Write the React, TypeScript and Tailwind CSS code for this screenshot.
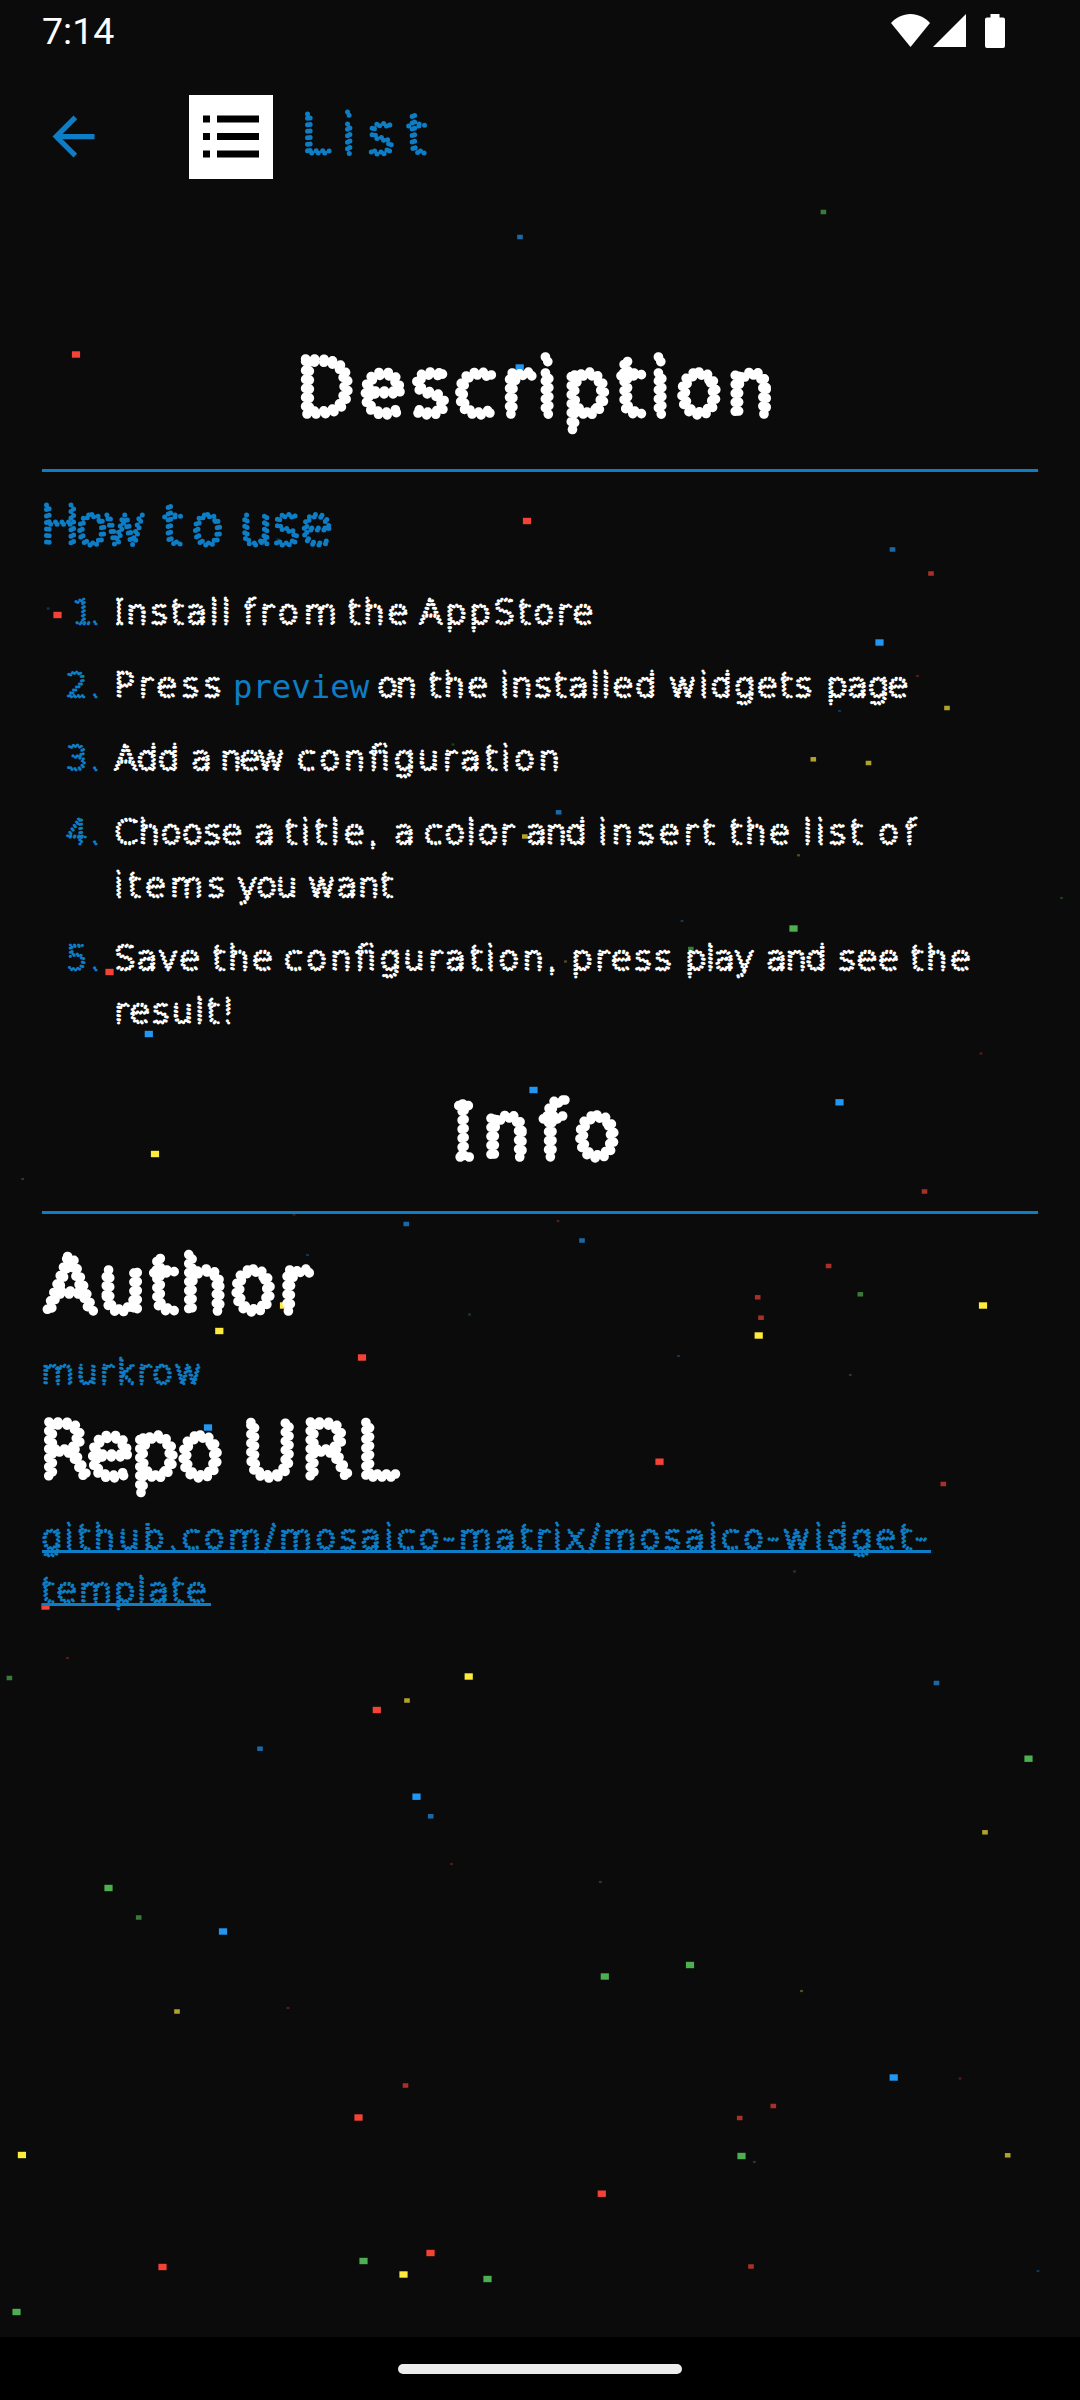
import React from "react";

type Size = "sm" | "md" | "lg";

// Metrics of the dot-matrix lettering: line box, baseline and side bearing in pixels.
const METRICS: Record<Size, { height: number; baseline: number; bearing: number; cls: string }> = {
  sm: {
    height: 53,
    baseline: 38,
    bearing: 1,
    cls: "text-[34.5px] [stroke-width:3.1px] [stroke-dasharray:0_4.1px]",
  },
  md: {
    height: 68,
    baseline: 55.5,
    bearing: 2,
    cls: "text-[53.5px] [stroke-width:5px] [stroke-dasharray:0_6.5px]",
  },
  lg: {
    height: 100,
    baseline: 78,
    bearing: 2.4,
    cls: "text-[75px] [stroke-width:9.6px] [stroke-dasharray:0_9px]",
  },
};

// [word, left edge, right edge] inside a line
type Word = [string, number, number];

function DotLine({
  words,
  size = "sm",
  underline,
}: {
  words: Word[];
  size?: Size;
  underline?: number;
}) {
  const m = METRICS[size];
  return (
    <span className={underline ? "relative flex" : "flex"}>
      {words.map(([word, start, end], i) => {
        const next = words[i + 1];
        return (
          <svg
            key={i}
            width={next ? next[1] - start : end - start}
            height={m.height}
            className="shrink-0 overflow-visible"
          >
            <text
              x={-m.bearing}
              y={m.baseline}
              textLength={end - start + m.bearing * 2}
              lengthAdjust="spacing"
              className={`fill-none stroke-current font-['DejaVu_Sans',sans-serif] font-extralight [stroke-linecap:round] ${m.cls}`}
            >
              {word.startsWith("I") ? (
                <>
                  <tspan className="font-['Noto_Sans',sans-serif] font-thin">I</tspan>
                  {word.slice(1)}
                </>
              ) : (
                word
              )}
            </text>
          </svg>
        );
      })}
      {underline ? (
        <span className="absolute left-0 top-[39px] h-[2.5px] bg-[#0d7dc5]" style={{ width: underline }} />
      ) : null}
    </span>
  );
}

const COLORS = { b: "#2196f3", r: "#f44336", y: "#ffeb3b", g: "#4caf50" };
const DOTS = {
  L: { w: 8.2, h: 6.4, o: 1 },
  M: { w: 5.6, h: 4.5, o: 0.68 },
  S: { w: 2.8, h: 2.2, o: 0.32 },
};

const PARTICLES: [keyof typeof DOTS, keyof typeof COLORS, number, number][] = [
  ["M", "b", 520, 237], ["M", "g", 823.4, 212], ["L", "b", 519.7, 367.5], ["L", "r", 76, 354.5],
  ["L", "r", 527, 521], ["S", "b", 48.2, 608.5], ["L", "r", 57.5, 615], ["S", "b", 278, 539.5],
  ["S", "g", 453, 744.5], ["M", "b", 892.5, 549.5], ["M", "r", 931, 573.5], ["L", "b", 879.5, 642.5],
  ["S", "r", 917.5, 676], ["M", "y", 947, 708], ["S", "b", 839.5, 711], ["M", "y", 813.3, 759.3],
  ["M", "y", 868.5, 763], ["M", "b", 558.6, 812.3], ["S", "y", 798.5, 855.3], ["S", "g", 1061.5, 898],
  ["M", "y", 524.8, 836.5], ["L", "r", 109.5, 972], ["L", "b", 148.8, 1034], ["L", "g", 793.5, 928.5],
  ["S", "b", 682, 921], ["S", "y", 565.5, 961.5], ["M", "g", 690.8, 949], ["S", "r", 981, 1053.5],
  ["L", "b", 839.5, 1102.3], ["M", "r", 924.5, 1191.5], ["S", "r", 558, 1221], ["M", "b", 582, 1240.5],
  ["L", "b", 533.5, 1090], ["L", "y", 155, 1154], ["S", "g", 22.6, 1179], ["M", "b", 406.3, 1224],
  ["S", "b", 307.5, 1255], ["L", "y", 284, 1305.5], ["L", "y", 219.3, 1331], ["S", "g", 469.5, 1314.5],
  ["L", "r", 362, 1357.5], ["S", "b", 678.5, 1356], ["L", "b", 208, 1427.5], ["S", "r", 294, 1214.5],
  ["M", "r", 828.6, 1266], ["M", "r", 757.7, 1297.3], ["M", "g", 860.3, 1294.3], ["M", "r", 761, 1317.7],
  ["L", "y", 983, 1305.5], ["L", "y", 758.7, 1335.5], ["S", "g", 850.3, 1375], ["L", "r", 659.5, 1461.7],
  ["M", "r", 943.3, 1484], ["S", "g", 794.5, 1571.5], ["M", "b", 936.5, 1683], ["L", "r", 45.5, 1606.5],
  ["S", "r", 67.5, 1658], ["M", "g", 9.4, 1678], ["L", "y", 468.7, 1676.5], ["M", "y", 407, 1700.5],
  ["L", "r", 376.8, 1710], ["M", "b", 260, 1748.7], ["L", "b", 416.5, 1796.7], ["M", "b", 430.7, 1816.3],
  ["S", "r", 451.5, 1864], ["L", "g", 108.5, 1888], ["M", "g", 138.7, 1917.5], ["L", "b", 223, 1931.5],
  ["M", "y", 177, 2011.5], ["S", "r", 288, 2008], ["M", "r", 405.5, 2085.5], ["L", "r", 358.5, 2117.5],
  ["L", "y", 21.9, 2155], ["L", "r", 430.5, 2253], ["L", "g", 363.5, 2261], ["L", "y", 403.5, 2274.5],
  ["L", "r", 162.5, 2267], ["L", "g", 487.5, 2279], ["L", "g", 16.5, 2312], ["L", "g", 1028.5, 1758.7],
  ["M", "y", 985, 1832.3], ["S", "g", 600.4, 1882], ["L", "g", 690, 1965], ["L", "g", 604.8, 1976.5],
  ["S", "y", 801.5, 1991], ["L", "b", 893.7, 2077.5], ["S", "r", 960, 2078.5], ["M", "r", 773.3, 2106],
  ["M", "r", 739.7, 2118], ["L", "g", 741.5, 2156], ["S", "g", 754.3, 2162], ["M", "y", 1007.7, 2155.3],
  ["L", "r", 601.8, 2193.7], ["M", "r", 751, 2266.5], ["S", "b", 1038, 2271],
];

function Particles() {
  return (
    <svg className="absolute inset-0" width="1080" height="2400" aria-hidden="true">
      {PARTICLES.map(([size, color, x, y], i) => {
        const d = DOTS[size];
        return (
          <rect
            key={i}
            x={x - d.w / 2}
            y={y - d.h / 2}
            width={d.w}
            height={d.h}
            fill={COLORS[color]}
            opacity={d.o}
          />
        );
      })}
    </svg>
  );
}

function StatusBar() {
  return (
    <div className="flex h-[63px] items-start justify-between pl-[42px] pr-[75px]">
      <span className="pt-[8px] font-['Roboto',sans-serif] text-[37.5px] leading-[46px] text-white">7:14</span>
      <div className="flex pt-[14px] text-white">
        <svg width="39" height="33" viewBox="0 0 39 33" fill="currentColor">
          <path d="M19.5 33L0 9C5 3.5 12 0 19.5 0S34 3.5 39 9z" />
        </svg>
        <svg width="33" height="33" viewBox="0 0 33 33" fill="currentColor" className="ml-[3px]">
          <path d="M33 0v33H0z" />
        </svg>
        <svg width="20" height="34" viewBox="0 0 20 34" fill="currentColor" className="ml-[19px]">
          <path d="M5.5 0h9v3.5H18a2 2 0 0 1 2 2V32a2 2 0 0 1-2 2H2a2 2 0 0 1-2-2V5.500a2 2 0 0 1 2-2h3.500z" />
        </svg>
      </div>
    </div>
  );
}

function AppBar() {
  return (
    <header className="flex h-[147px] items-center pl-[42px] text-[#0d7dc5]">
      <svg width="63" height="63" viewBox="0 0 24 24" fill="currentColor">
        <path d="M20 11H7.830l5.590-5.590L12 4l-8 8 8 8 1.410-1.410L7.830 13H20v-2z" />
      </svg>
      <svg width="84" height="84" viewBox="0 0 84 84" className="ml-[84px]">
        <rect width="84" height="84" fill="#fff" />
        {[20.5, 38, 55.5].map((y) => (
          <g key={y}>
            <rect x="14" y={y} width="7" height="7" />
            <rect x="28" y={y} width="42" height="7" />
          </g>
        ))}
      </svg>
      <h1 className="ml-[30px] mt-[-11px]">
        <DotLine size="md" words={[["List", 304.5, 426.4]]} />
      </h1>
    </header>
  );
}

const STEPS: { n: Word; lines: Word[][] }[] = [
  {
    n: ["1.", 73, 100],
    lines: [[["Install", 115.4, 230.4], ["from", 243.8, 335.8], ["the", 348.5, 408], ["AppStore", 420.5, 593]]],
  },
  { n: ["2.", 67, 100], lines: [] },
  {
    n: ["3.", 67, 100],
    lines: [[["Add", 115.4, 178.7], ["a", 192, 208.7], ["new", 221.4, 284.8], ["configuration", 297.9, 559]]],
  },
  {
    n: ["4.", 67, 100],
    lines: [
      [
        ["Choose", 115.4, 242], ["a", 254.8, 271.7], ["title,", 285, 378], ["a", 395, 412], ["color", 425, 513],
        ["and", 527, 586], ["insert", 599, 714], ["the", 730.4, 789.3], ["list", 804, 862], ["of", 878.9, 915],
      ],
      [["items", 115.7, 225], ["you", 238, 296.5], ["want", 309.6, 393]],
    ],
  },
  {
    n: ["5.", 67, 100],
    lines: [
      [
        ["Save", 115.4, 199.7], ["the", 212.8, 271.7], ["configuration,", 285, 557], ["press", 572, 671],
        ["play", 686.4, 753.9], ["and", 767, 826], ["see", 839, 898], ["the", 911, 970],
      ],
      [["result!", 115.4, 234.5]],
    ],
  },
];

function Rule() {
  return <div className="mt-[32.500px] h-[3px] bg-[#0d7dc5]" />;
}

export default function App() {
  return (
    <div className="relative flex h-[2400px] w-[1080px] flex-col overflow-hidden bg-[#0b0b0b]">
      <Particles />
      <div className="relative flex grow flex-col">
        <StatusBar />
        <AppBar />
        <main className="flex flex-col px-[42px] pt-[126px] text-white">
          <h2 className="pl-[257px]">
            <DotLine size="lg" words={[["Description", 299, 772]]} />
          </h2>
          <Rule />
          <h3 className="mt-[16px] text-[#0d7dc5]">
            <DotLine size="md" words={[["How", 41.7, 145], ["to", 164, 222], ["use", 241, 331]]} />
          </h3>
          <ol className="mt-[30px] flex flex-col gap-[20.400px]">
            {STEPS.map(({ n, lines }) => (
              <li key={n[0]} className="flex">
                <div className="flex w-[73.400px] justify-end pr-[15.400px] text-[#0d7dc5]">
                  <DotLine words={[n]} />
                </div>
                <div className="flex flex-col">
                  {lines.map((words, i) => (
                    <DotLine key={i} words={words} />
                  ))}
                  {n[0] === "2." && (
                    <div className="flex h-[53px]">
                      <DotLine words={[["Press", 115.4, 221]]} />
                      <code className="ml-[12px] w-[145px] pt-[9px] font-['DejaVu_Sans_Mono',monospace] text-[32.300px] leading-[38px] text-[#0d7dc5]">
                        preview
                      </code>
                      <DotLine
                        words={[
                          ["on", 378.5, 416.7], ["the", 429.8, 488], ["installed", 501.4, 656],
                          ["widgets", 670.9, 812.5], ["page", 827.2, 907.8],
                        ]}
                      />
                    </div>
                  )}
                </div>
              </li>
            ))}
          </ol>
          <h2 className="mt-[40.500px] pl-[412.500px]">
            <DotLine size="lg" words={[["Info", 454.5, 617]]} />
          </h2>
          <Rule />
          <h3 className="mt-[19px] pl-[5px]">
            <DotLine size="lg" words={[["Author", 47, 307]]} />
          </h3>
          <p className="mt-[12.500px] text-[#0d7dc5]">
            <DotLine words={[["murkrow", 42, 201.8]]} />
          </p>
          <h3>
            <DotLine size="lg" words={[["Repo", 42, 220.8], ["URL", 244.9, 396]]} />
          </h3>
          <a className="mt-[12.500px] flex flex-col text-[#0d7dc5]">
            <DotLine words={[["github.com/mosaico-matrix/mosaico-widget-", 42, 927]]} underline={888.6} />
            <DotLine words={[["template", 42, 206]]} underline={169} />
          </a>
        </main>
      </div>
      <div className="relative flex h-[63px] justify-center bg-black pt-[27px]">
        <div className="h-[10px] w-[284px] rounded-full bg-[#ececec]" />
      </div>
    </div>
  );
}
